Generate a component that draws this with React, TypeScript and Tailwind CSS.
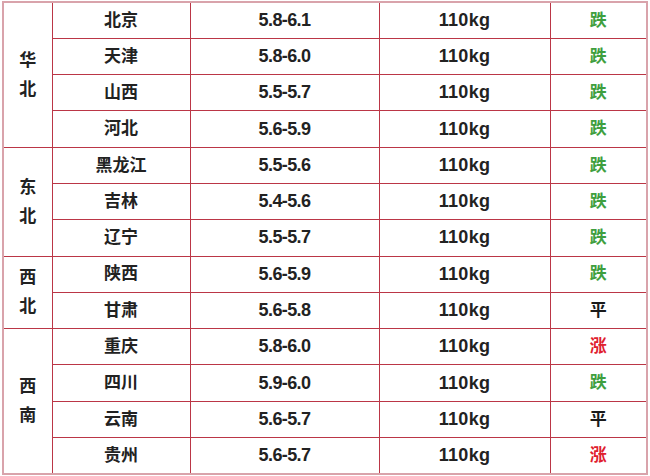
import React from "react";

type Row = { city: string; price: string; weight: string; trend: "跌" | "涨" | "平" };

const groups: { region: string; rows: Row[] }[] = [
  {
    region: "华北",
    rows: [
      { city: "北京", price: "5.8-6.1", weight: "110kg", trend: "跌" },
      { city: "天津", price: "5.8-6.0", weight: "110kg", trend: "跌" },
      { city: "山西", price: "5.5-5.7", weight: "110kg", trend: "跌" },
      { city: "河北", price: "5.6-5.9", weight: "110kg", trend: "跌" },
    ],
  },
  {
    region: "东北",
    rows: [
      { city: "黑龙江", price: "5.5-5.6", weight: "110kg", trend: "跌" },
      { city: "吉林", price: "5.4-5.6", weight: "110kg", trend: "跌" },
      { city: "辽宁", price: "5.5-5.7", weight: "110kg", trend: "跌" },
    ],
  },
  {
    region: "西北",
    rows: [
      { city: "陕西", price: "5.6-5.9", weight: "110kg", trend: "跌" },
      { city: "甘肃", price: "5.6-5.8", weight: "110kg", trend: "平" },
    ],
  },
  {
    region: "西南",
    rows: [
      { city: "重庆", price: "5.8-6.0", weight: "110kg", trend: "涨" },
      { city: "四川", price: "5.9-6.0", weight: "110kg", trend: "跌" },
      { city: "云南", price: "5.6-5.7", weight: "110kg", trend: "平" },
      { city: "贵州", price: "5.6-5.7", weight: "110kg", trend: "涨" },
    ],
  },
];

const trendColor = {
  跌: "text-[#3f9f3f]",
  涨: "text-[#e0202e]",
  平: "text-[#1a1a1a]",
};

const cell = "border border-[#bb3646] text-center align-middle p-0";

const App = () => {
  return (
    <div className="w-[650px] h-[476px] bg-white pt-px pl-[2px] font-['Liberation_Sans','Noto_Sans_CJK_SC',sans-serif] font-bold text-[#222]">
      <table className="w-[646px] h-[473px] border-collapse table-fixed border-2 border-[#d9a3ab]">
        <colgroup>
          <col className="w-[49px]" />
          <col className="w-[138px]" />
          <col className="w-[189px]" />
          <col className="w-[171px]" />
          <col />
        </colgroup>
        <tbody>
          {groups.map((g) =>
            g.rows.map((r, i) => (
              <tr key={r.city} className="h-[36.3px]">
                {i === 0 && (
                  <td rowSpan={g.rows.length} className={`${cell} text-[17px] leading-[29px]`}>
                    {/* region name stacked */}
                    <div className="flex flex-col items-center">
                      {g.region.split("").map((ch) => (
                        <span key={ch}>{ch}</span>
                      ))}
                    </div>
                  </td>
                )}
                <td className={`${cell} text-[17px]`}>{r.city}</td>
                <td className={`${cell} text-[18px] tracking-[-0.6px]`}>{r.price}</td>
                <td className={`${cell} text-[18px] tracking-[0.3px]`}>{r.weight}</td>
                <td className={`${cell} text-[17px] ${trendColor[r.trend]}`}>{r.trend}</td>
              </tr>
            ))
          )}
        </tbody>
      </table>
    </div>
  );
};

export default App;
